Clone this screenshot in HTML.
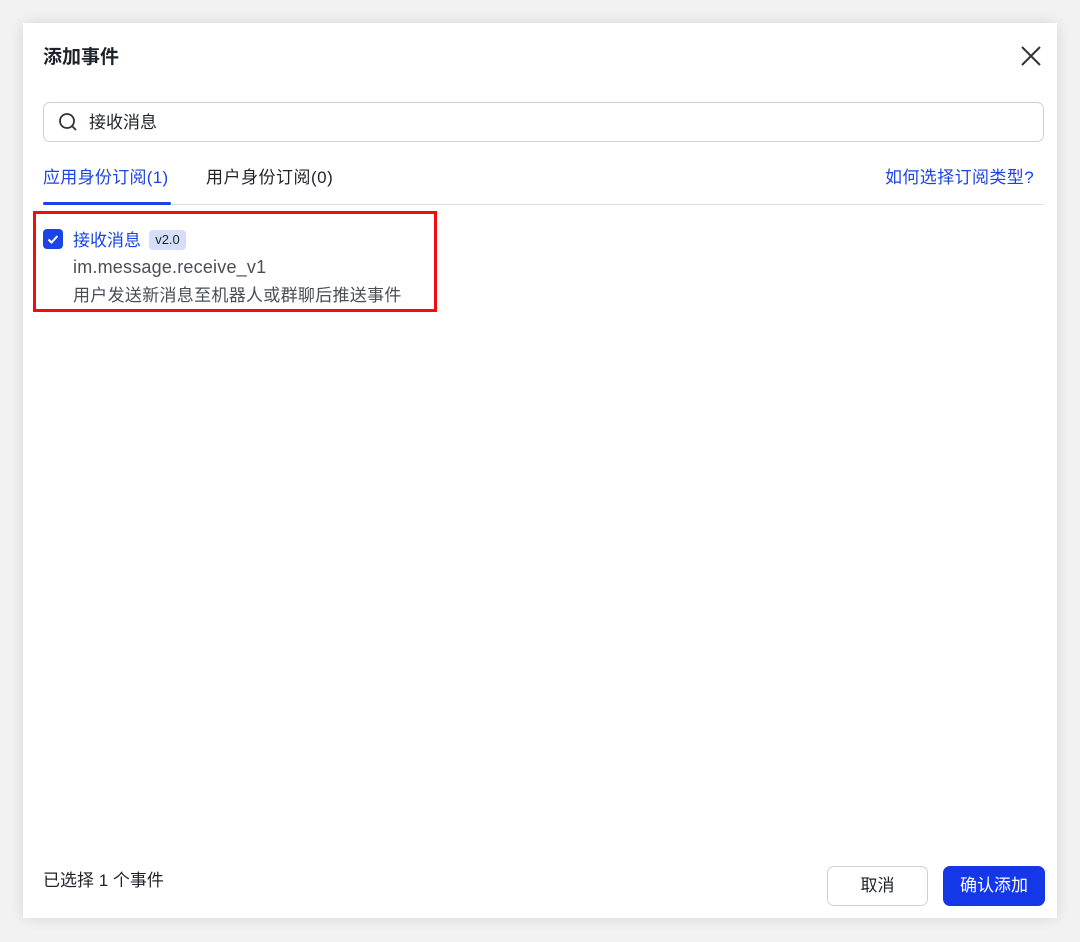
<!DOCTYPE html>
<html><head><meta charset="utf-8"><style>
*{box-sizing:border-box;margin:0;padding:0}
body{width:1080px;height:942px;background:#f2f2f2;font-family:"Liberation Sans","Noto Sans CJK SC",sans-serif;position:relative;overflow:hidden}
.dlg{position:absolute;left:23px;top:23px;width:1034px;height:895px;background:#fff;box-shadow:0 0 14px rgba(0,0,0,.12)}
.abs{position:absolute;white-space:nowrap;line-height:24px}
</style></head><body>
<div class="dlg">
<div class="abs" style="left:20px;top:23px;font-size:19px;font-weight:bold;color:#1f2329">添加事件</div>
<svg class="abs" style="left:997px;top:22px" width="22" height="22" viewBox="0 0 22 22"><path d="M2 2L20 20M20 2L2 20" stroke="#333" stroke-width="2" fill="none"/></svg>
<div class="abs" style="left:20px;top:79px;width:1001px;height:40px;border:1px solid #ccd0d5;border-radius:7px"></div>
<svg class="abs" style="left:35px;top:89px" width="20" height="20" viewBox="0 0 20 20"><circle cx="9" cy="9" r="7" stroke="#333" stroke-width="1.8" fill="none"/><path d="M14 14L18 18" stroke="#333" stroke-width="1.8"/></svg>
<div class="abs" style="left:66px;top:88px;font-size:17px;color:#1f2329">接收消息</div>
<div class="abs" style="left:20px;top:143px;font-size:17px;color:#1a44e6;letter-spacing:0.3px">应用身份订阅(1)</div>
<div class="abs" style="left:183px;top:143px;font-size:17px;color:#1f2329;letter-spacing:0.5px">用户身份订阅(0)</div>
<div class="abs" style="left:862px;top:143px;font-size:17px;color:#1a44e6;letter-spacing:0.4px">如何选择订阅类型?</div>
<div class="abs" style="left:20px;top:181px;width:1001px;height:1px;background:#dee0e3"></div>
<div class="abs" style="left:20px;top:179px;width:128px;height:3px;background:#1a44e6;border-radius:2px"></div>
<div class="abs" style="left:10px;top:188px;width:404px;height:101px;border:3px solid #f20d0d"></div>
<div class="abs" style="left:20px;top:206px;width:20px;height:20px;background:#1a44e6;border-radius:4px"></div>
<svg class="abs" style="left:20px;top:206px" width="20" height="20" viewBox="0 0 20 20"><path d="M5.5 10.5L8.5 13.5L14.5 7" stroke="#fff" stroke-width="2" fill="none"/></svg>
<div class="abs" style="left:50px;top:206px;font-size:17px;color:#1a44e6">接收消息</div>
<div class="abs" style="left:126px;top:207px;width:37px;height:20px;background:#d4def9;border-radius:4px;font-size:13px;color:#1f2329;text-align:center;line-height:20px">v2.0</div>
<div class="abs" style="left:50px;top:232px;font-size:18px;color:#4a4f56;letter-spacing:0.2px">im.message.receive_v1</div>
<div class="abs" style="left:50px;top:261px;font-size:17px;color:#4a4f56;letter-spacing:0.3px">用户发送新消息至机器人或群聊后推送事件</div>
<div class="abs" style="left:20px;top:846px;font-size:17px;color:#1f2329">已选择 1 个事件</div>
<div class="abs" style="left:804px;top:843px;width:101px;height:40px;border:1px solid #ccd0d5;border-radius:7px;font-size:17px;color:#1f2329;text-align:center;line-height:38px">取消</div>
<div class="abs" style="left:920px;top:843px;width:102px;height:40px;background:#1437e8;border-radius:7px;font-size:17px;color:#fff;text-align:center;line-height:40px">确认添加</div>
</div>
</body></html>
